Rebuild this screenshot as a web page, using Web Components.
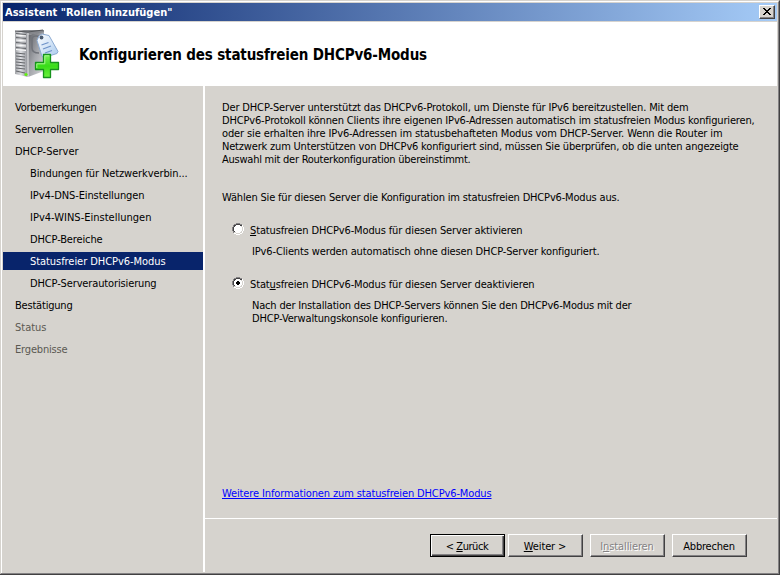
<!DOCTYPE html>
<html lang="de">
<head>
<meta charset="utf-8">
<title>Assistent "Rollen hinzufügen"</title>
<style>
html,body{margin:0;padding:0;overflow:hidden}
body{font:11px/13px "DejaVu Sans Condensed","DejaVu Sans",sans-serif;font-stretch:condensed;color:#000}
u{text-decoration:underline;text-underline-offset:1px;text-decoration-thickness:1px;text-decoration-skip-ink:none}
</style>
</head>
<body>
<wizard-window>
  <title-bar slot="title"><fit-text w="168">Assistent "Rollen hinzufügen"</fit-text></title-bar>
  <wizard-header slot="header"><fit-text w="348">Konfigurieren des statusfreien DHCPv6-Modus</fit-text></wizard-header>
  <step-list slot="steps">
    <step-item><fit-text w="82">Vorbemerkungen</fit-text></step-item>
    <step-item><fit-text w="59">Serverrollen</fit-text></step-item>
    <step-item><fit-text w="64">DHCP-Server</fit-text></step-item>
    <step-item sub><fit-text w="158">Bindungen für Netzwerkverbin...</fit-text></step-item>
    <step-item sub><fit-text w="115">IPv4-DNS-Einstellungen</fit-text></step-item>
    <step-item sub><fit-text w="122">IPv4-WINS-Einstellungen</fit-text></step-item>
    <step-item sub><fit-text w="73">DHCP-Bereiche</fit-text></step-item>
    <step-item sub selected><fit-text w="136">Statusfreier DHCPv6-Modus</fit-text></step-item>
    <step-item sub><fit-text w="127">DHCP-Serverautorisierung</fit-text></step-item>
    <step-item><fit-text w="58">Bestätigung</fit-text></step-item>
    <step-item pending><fit-text w="32">Status</fit-text></step-item>
    <step-item pending><fit-text w="53">Ergebnisse</fit-text></step-item>
  </step-list>
  <wizard-page slot="page">
    <fit-text w="467">Der DHCP-Server unterstützt das DHCPv6-Protokoll, um Dienste für IPv6 bereitzustellen. Mit dem</fit-text>
    <fit-text w="533">DHCPv6-Protokoll können Clients ihre eigenen IPv6-Adressen automatisch im statusfreien Modus konfigurieren,</fit-text>
    <fit-text w="501">oder sie erhalten ihre IPv6-Adressen im statusbehafteten Modus vom DHCP-Server. Wenn die Router im</fit-text>
    <fit-text w="517">Netzwerk zum Unterstützen von DHCPv6 konfiguriert sind, müssen Sie überprüfen, ob die unten angezeigte</fit-text>
    <fit-text w="249">Auswahl mit der Routerkonfiguration übereinstimmt.</fit-text>
    <fit-text slot="prompt" w="398">Wählen Sie für diesen Server die Konfiguration im statusfreien DHCPv6-Modus aus.</fit-text>
    <radio-option slot="options">
      <fit-text slot="label" w="273"><u>S</u>tatusfreien DHCPv6-Modus für diesen Server aktivieren</fit-text>
      <fit-text w="348">IPv6-Clients werden automatisch ohne diesen DHCP-Server konfiguriert.</fit-text>
    </radio-option>
    <radio-option slot="options" checked>
      <fit-text slot="label" w="285">Stat<u>u</u>sfreien DHCPv6-Modus für diesen Server deaktivieren</fit-text>
      <fit-text w="380">Nach der Installation des DHCP-Servers können Sie den DHCPv6-Modus mit der</fit-text>
      <fit-text w="196">DHCP-Verwaltungskonsole konfigurieren.</fit-text>
    </radio-option>
    <help-link slot="link"><fit-text w="270"><u>Weitere Informationen zum statusfreien DHCPv6-Modus</u></fit-text></help-link>
  </wizard-page>
  <button-row slot="buttons">
    <push-button default><fit-text w="43">&lt; <u>Z</u>urück</fit-text></push-button>
    <push-button><fit-text w="43"><u>W</u>eiter &gt;</fit-text></push-button>
    <push-button disabled class="gap"><fit-text w="54">I<u>n</u>stallieren</fit-text></push-button>
    <push-button class="gap"><fit-text w="52">Abbrechen</fit-text></push-button>
  </button-row>
</wizard-window>

<script>
const define = (name, html, setup) => {
  const t = document.createElement('template');
  t.innerHTML = html;
  customElements.define(name, class extends HTMLElement {
    constructor() {
      super();
      this.attachShadow({mode: 'open'}).append(t.content.cloneNode(true));
    }
    connectedCallback() { if (setup) setup(this); }
  });
};

define('wizard-window', `<style>
:host{display:grid;grid-template-columns:200px 1fr;grid-template-rows:18px 65px 1fr;box-sizing:border-box;width:780px;height:575px;
 background:#d6d3ce;padding:1px 1px 0 2px;
 border-top:2px solid #fff;border-right:2px solid #848284;border-bottom:2px solid #848284;border-left:1px solid #d6d3ce;
 box-shadow:inset 1px 0 #fff;position:relative}
:host::after{content:"";position:absolute;left:-1px;top:-2px;right:-2px;bottom:-2px;border-top:1px solid #d6d3ce;border-right:1px solid #424142;border-bottom:1px solid #424142;pointer-events:none}
.top{grid-column:1/3}
.side{border-right:2px solid #fff;width:200px;margin-bottom:1px}
.main{display:flex;flex-direction:column;padding-left:2px}
.page{flex:1}
.foot{height:54px;border-top:1px solid #fff}
</style>
<div class="top"><slot name="title"></slot></div>
<div class="top"><slot name="header"></slot></div>
<div class="side"><slot name="steps"></slot></div>
<div class="main"><div class="page"><slot name="page"></slot></div><div class="foot"><slot name="buttons"></slot></div></div>`);

define('title-bar', `<style>
:host{display:flex;justify-content:space-between;align-items:center;box-sizing:border-box;height:18px;padding:0 2px;color:#fff;font-weight:bold;
 background:linear-gradient(90deg,#08246b,#a5cbf7)}
.x{box-sizing:border-box;width:16px;height:14px;background:#d6d3ce;border:1px solid;border-color:#fff #424142 #424142 #fff;box-shadow:inset -1px -1px #848284}
svg{display:block}
</style><slot></slot><div class="x"><svg width="14" height="12" shape-rendering="crispEdges"><path d="M3 2h2v1h1v1h2v-1h1v-1h2v1h-1v1h-1v1h-1v1h1v1h1v1h1v1h-2v-1h-1v-1h-2v1h-1v1h-2v-1h1v-1h1v-1h1v-1h-1v-1h-1v-1h-1z"/></svg></div>`);

define('wizard-header', `<style>
:host{display:flex;align-items:center;box-sizing:border-box;height:64px;margin-top:1px;background:#fff;font-size:15px;font-weight:bold;line-height:18px}
svg{display:block;flex:none;width:64px;height:64px;margin-right:12px}
::slotted(fit-text){margin-top:2px}
</style>
<svg viewBox="3 22 64 64">
 <defs>
  <linearGradient id="f" x2="1"><stop stop-color="#a2a4a8"/><stop offset=".45" stop-color="#dedfe3"/><stop offset="1" stop-color="#8d8f95"/></linearGradient>
  <linearGradient id="s" x2="1" y2="1"><stop stop-color="#5c5e64"/><stop offset=".5" stop-color="#a4a6ab"/><stop offset="1" stop-color="#d8d9dc"/></linearGradient>
  <linearGradient id="g" x2="0" y2="1"><stop stop-color="#7cf05c"/><stop offset=".5" stop-color="#38dc18"/><stop offset="1" stop-color="#6cf23c"/></linearGradient>
  <linearGradient id="t" x2="1" y2="1"><stop stop-color="#fff"/><stop offset="1" stop-color="#a9caee"/></linearGradient>
 </defs>
 <path d="M28 35l16-4v40l-16 6z" fill="url(#s)"/>
 <path d="M15 31l9-1h20v2l-15 3z" fill="#85878c"/>
 <path d="M15 31l13 2v44l-13-3z" fill="url(#f)"/>
 <path d="M15 31l13 1 15-2" fill="none" stroke="#54565a"/>
 <path d="M28 33v44" stroke="#f0f0f2"/>
 <g stroke="#fafafa" stroke-width="1.2"><path d="M16 35l10 1M16 40l10 1M16 45l10 1M16 49.500l10 1"/></g>
 <g stroke="#64666a"><path d="M16 33.500l10 1M16 37.500l10 1M16 42.500l10 1M16 47.500l10 1M16 53l9 1M16 56l9 1M16 59l9 1M16 62l9 1M16 65l9 1M16 68l9 1M16 71l9 2"/></g>
 <path d="M40 37c-3-2-8-1-8 2v9c0 4 3 5 7 5" fill="none" stroke="#70737a" stroke-width="1.500"/>
 <path d="M39 36l3-2 7 1.500 9 16-1 2-13 4-2-1-5-16z" fill="url(#t)" stroke="#8dabd2"/>
 <circle cx="41.500" cy="37.500" r="1.900" fill="#4d5d72"/>
 <path d="M41.500 45l7-2.500M43 49l8-3M45 53l7-2.500" stroke="#6d92c8" stroke-width="1.200"/>
 <circle cx="26" cy="74.500" r="1.600" fill="#62f010"/>
 <path d="M43.500 54.500h7v8h8v7h-8v8h-7v-8h-8v-7h8z" fill="url(#g)" stroke="#16931c" stroke-width="1.300" stroke-linejoin="round"/>
 <path d="M44.800 63.800v-8h4.400M36.800 68v-4.200h8" fill="none" stroke="#a5f88d"/>
</svg><slot></slot>`);

define('step-list', `<style>:host{display:flex;flex-direction:column;gap:4px;padding-top:12px}</style><slot></slot>`);
define('step-item', `<style>
:host{display:block;box-sizing:border-box;height:18px;line-height:18px;padding:1px 0 0 12px}
:host([sub]){padding-left:27px}
:host([selected]){background:#08246b;color:#fff}
:host([pending]){color:#5b5952}
</style><slot></slot>`);

define('wizard-page', `<style>
:host{display:flex;flex-direction:column;box-sizing:border-box;height:100%;padding:15px 0 18px 17px}
.prompt{margin-top:25px}
.options{display:flex;flex-direction:column;gap:20px;margin:20px 0 0 10px;flex:1}
</style><div><slot></slot></div><div class="prompt"><slot name="prompt"></slot></div>
<div class="options"><slot name="options"></slot></div><slot name="link"></slot>`);

define('radio-option', `<style>
:host{display:block}
.row{display:flex;gap:6px}
svg{display:block;width:12px;height:12px;margin-top:-1px;flex:none}
.text{margin:8px 0 0 20px}
.dot{display:none}
:host([checked]) .dot{display:block}
</style><div class="row"><svg viewBox="0 0 12 12" shape-rendering="crispEdges">
<path fill="#fff" d="M4 2h4v1h1v1h1v4h-1v1h-1v1h-4v-1h-1v-1h-1v-4h1v-1h1z"/>
<path fill="#848284" d="M4 0h4v1h-4zM2 1h2v1h-2zM8 1h2v1h-2zM1 2h1v2h-1zM0 4h1v4h-1zM1 8h1v2h-1z"/>
<path fill="#424142" d="M4 1h4v1h-4zM2 2h2v1h-2zM8 2h2v1h-2zM2 3h1v1h-1zM1 4h1v4h-1zM2 8h1v1h-1z"/>
<path fill="#fff" d="M10 2h1v2h-1zM11 4h1v4h-1zM10 8h1v2h-1zM8 10h2v1h-2zM4 11h4v1h-4zM2 10h2v1h-2z"/>
<path class="dot" d="M5 4h2v1h1v2h-1v1h-2v-1h-1v-2h1z"/>
</svg><slot name="label"></slot></div><div class="text"><slot></slot></div>`);

define('help-link', `<style>:host{display:block;color:#00f}</style><slot></slot>`);

define('button-row', `<style>
:host{display:flex;gap:3px;padding:15px 30px 0 0;justify-content:flex-end}
::slotted(.gap){margin-left:4px}
</style><slot></slot>`);
define('push-button', `<style>
:host{display:flex;justify-content:center;align-items:center;box-sizing:border-box;width:75px;height:23px;padding:2px 1px 0 0;border:1px solid;border-color:#fff #424142 #424142 #fff;box-shadow:inset -1px -1px #848284}
:host([default]){border-color:#000;box-shadow:inset 1px 1px #fff,inset -1px -1px #424142,inset -2px -2px #848284}
:host([disabled]){color:#848284;text-shadow:1px 1px #fff}
</style><slot></slot>`);

// One line of text, letter-spaced to occupy exactly w pixels.
define('fit-text', `<style>:host{display:block;white-space:nowrap}span{display:inline-block}</style><span><slot></slot></span>`, el => {
  const s = el.shadowRoot.querySelector('span');
  const width = s.getBoundingClientRect().width;
  const n = el.textContent.trim().length;
  s.style.letterSpacing = ((+el.getAttribute('w') - .5 - width) / n) + 'px';
});
</script>
</body>
</html>
